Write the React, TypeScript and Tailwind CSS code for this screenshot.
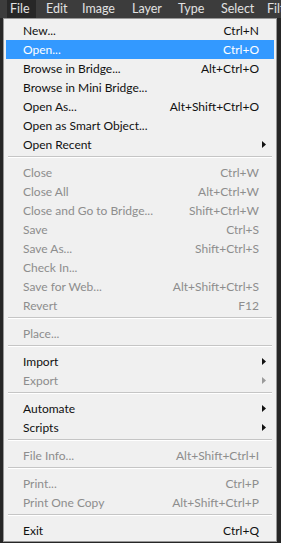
import React from 'react';

type Item =
  | { kind: 'sep' }
  | { kind: 'item'; label: string; shortcut?: string; sub?: boolean; disabled?: boolean; active?: boolean };

const sep: Item = { kind: 'sep' };
const it = (
  label: string,
  shortcut?: string,
  opts: { sub?: boolean; disabled?: boolean; active?: boolean } = {}
): Item => ({ kind: 'item', label, shortcut, ...opts });

const items: Item[] = [
  it('New...', 'Ctrl+N'),
  it('Open...', 'Ctrl+O', { active: true }),
  it('Browse in Bridge...', 'Alt+Ctrl+O'),
  it('Browse in Mini Bridge...'),
  it('Open As...', 'Alt+Shift+Ctrl+O'),
  it('Open as Smart Object...'),
  it('Open Recent', undefined, { sub: true }),
  sep,
  it('Close', 'Ctrl+W', { disabled: true }),
  it('Close All', 'Alt+Ctrl+W', { disabled: true }),
  it('Close and Go to Bridge...', 'Shift+Ctrl+W', { disabled: true }),
  it('Save', 'Ctrl+S', { disabled: true }),
  it('Save As...', 'Shift+Ctrl+S', { disabled: true }),
  it('Check In...', undefined, { disabled: true }),
  it('Save for Web...', 'Alt+Shift+Ctrl+S', { disabled: true }),
  it('Revert', 'F12', { disabled: true }),
  sep,
  it('Place...', undefined, { disabled: true }),
  sep,
  it('Import', undefined, { sub: true }),
  it('Export', undefined, { sub: true, disabled: true }),
  sep,
  it('Automate', undefined, { sub: true }),
  it('Scripts', undefined, { sub: true }),
  sep,
  it('File Info...', 'Alt+Shift+Ctrl+I', { disabled: true }),
  sep,
  it('Print...', 'Ctrl+P', { disabled: true }),
  it('Print One Copy', 'Alt+Shift+Ctrl+P', { disabled: true }),
  sep,
  it('Exit', 'Ctrl+Q'),
];

// menu bar labels with the box width each one takes
const menus: [string, string][] = [
  ['File', 'w-[29px] bg-[#272727]'],
  ['Edit', 'w-[36px] ml-[7px]'],
  ['Image', 'w-[50px]'],
  ['Layer', 'w-[46px]'],
  ['Type', 'w-[43px]'],
  ['Select', 'w-[46px]'],
  ['Filter', 'w-[30px]'],
];

function Arrow({ color }: { color: string }) {
  return (
    <svg width="4" height="7" viewBox="0 0 4 7" className="shrink-0">
      <path d="M0 0 L4 3.5 L0 7 Z" fill={color} />
    </svg>
  );
}

export default function App() {
  return (
    <div
      className="w-[281px] h-[543px] overflow-hidden bg-[#262626] text-[12px]"
      style={{ fontFamily: 'Lato, "Noto Sans", sans-serif' }}
    >
      <div className="h-[18px] flex items-stretch bg-[#3c3c3c] pl-[7px] leading-[17px] text-[12.5px]">
        {menus.map(([m, cls]) => (
          <div key={m} className={`pl-[3px] shrink-0 text-[#e2e2e2] whitespace-nowrap overflow-hidden ${cls}`}>
            {m}
          </div>
        ))}
      </div>

      <div className="ml-[3px] w-[274px] h-[524px] bg-[#f0f0f0] border border-[#979797] pt-[2px] px-[1px]">
        {items.map((x, i) =>
          x.kind === 'sep' ? (
            <div key={i} className="h-[9px] pt-[2px] px-[3px]">
              <div className="h-[1px] bg-[#c5c5c5]" />
              <div className="h-[1px] bg-white" />
            </div>
          ) : (
            <div key={i} className="px-[1px]">
              <div
                className={`h-[19px] flex items-center pl-[17px] pr-[15px] leading-[19px] whitespace-nowrap ${
                  x.active ? 'bg-[#3399ff] text-white' : x.disabled ? 'text-[#8d8d8d]' : 'text-[#111]'
                }`}
              >
                <span className="flex-1">{x.label}</span>
                {x.shortcut && <span>{x.shortcut}</span>}
                {x.sub && (
                  <span className="-mr-[7px]">
                    <Arrow color={x.disabled ? '#9a9a9a' : '#111'} />
                  </span>
                )}
              </div>
            </div>
          )
        )}
      </div>
    </div>
  );
}
